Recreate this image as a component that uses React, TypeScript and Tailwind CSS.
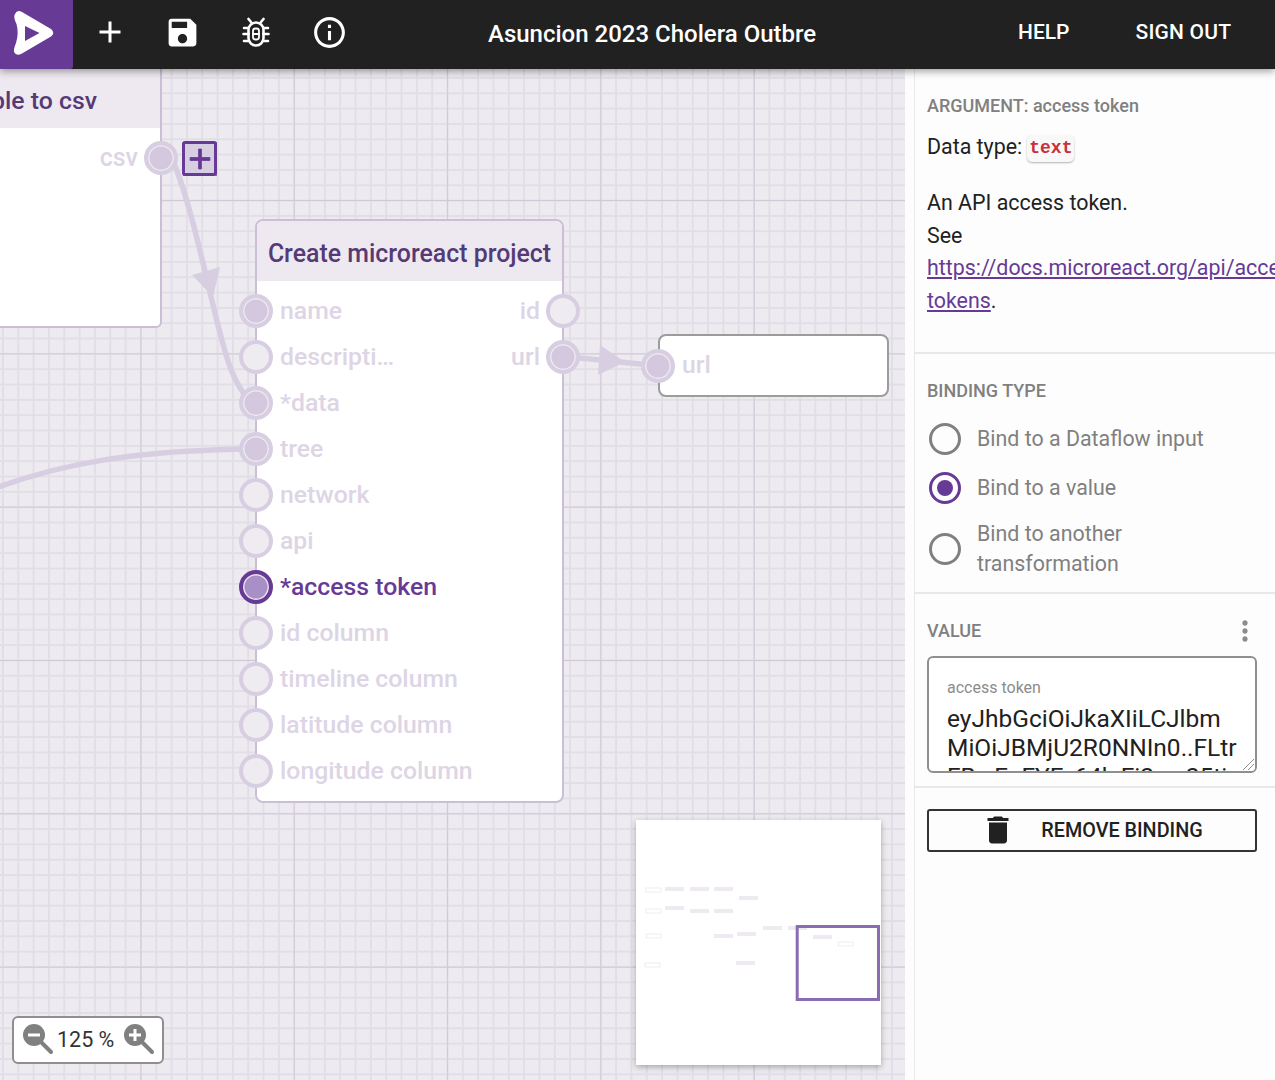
import React from 'react';
import { MdAdd, MdSave, MdInfoOutline, MdDelete, MdMoreVert } from 'react-icons/md';

type PortState = 'bound' | 'free' | 'active';

const Port: React.FC<{ state: PortState; className?: string }> = ({ state, className = '' }) => {
  const look = {
    bound: 'border-[#d8cee2] bg-[#d3c8de] shadow-[inset_0_0_0_1.5px_#eee9f2]',
    free: 'border-[#d8cee2] bg-[#eeebf1]',
    active: 'border-[#673a96] bg-[#a88fc6] shadow-[inset_0_0_0_1.5px_#e9e2f0]',
  }[state];
  return <span className={`relative z-10 block w-[34px] h-[34px] shrink-0 rounded-full border-[4px] ${look} ${className}`} />;
};

const inputs: { name: string; state: PortState }[] = [
  { name: 'name', state: 'bound' },
  { name: 'descripti…', state: 'free' },
  { name: '*data', state: 'bound' },
  { name: 'tree', state: 'bound' },
  { name: 'network', state: 'free' },
  { name: 'api', state: 'free' },
  { name: '*access token', state: 'active' },
  { name: 'id column', state: 'free' },
  { name: 'timeline column', state: 'free' },
  { name: 'latitude column', state: 'free' },
  { name: 'longitude column', state: 'free' },
];

const outputs: { name: string; state: PortState }[] = [
  { name: 'id', state: 'free' },
  { name: 'url', state: 'bound' },
];

const miniBars = [
  [35, 77], [60, 77], [84, 77], [109, 86], [35, 96], [60, 99], [84, 99], [84, 124], [107, 122], [133, 116], [158, 116], [183, 125], [106, 151],
];
const miniBoxes = [
  [16, 78], [16, 99], [16, 124], [15, 153], [208, 132],
];

const Edges = () => (
  <svg className="absolute inset-0 w-full h-full" viewBox="0 0 905 1011" fill="none">
    <g stroke="#d8cee2" strokeWidth="5.5" strokeLinecap="round">
      <path d="M172 90 C188 125 203 195 214 240 S232 315 252 334" />
      <path d="M-2 418 C60 396 130 381 254 380" />
      <path d="M570 288 L620 293 L650 296" />
    </g>
    <polygon points="220,198 192,206 213,228" fill="#d8cee2" />
    <polygon points="600,276 598,306 625,293" fill="#d8cee2" />
  </svg>
);

const Minimap = () => (
  <svg className="absolute left-[636px] top-[751px] w-[245px] h-[245px] bg-white shadow-[0_2px_6px_rgba(0,0,0,0.3)]" viewBox="0 0 245 245">
    {miniBars.map(([x, y]) => (
      <rect key={`${x}-${y}`} x={x - 6} y={y - 10} width="19" height="4" fill="#efeaf2" />
    ))}
    {miniBoxes.map(([x, y]) => (
      <rect key={`${x}-${y}`} x={x - 6} y={y - 10} width="15" height="4" fill="#fff" stroke="#eeeeee" />
    ))}
    <rect x="161.2" y="106.5" width="81.3" height="73" fill="none" stroke="#8a6cb3" strokeWidth="3" />
  </svg>
);

const ZoomGlyph: React.FC<{ plus?: boolean }> = ({ plus }) => (
  <svg width="32" height="32" viewBox="0 0 32 32">
    <line x1="17" y1="17" x2="29" y2="29" stroke="#808080" strokeWidth="4" strokeLinecap="round" />
    <circle cx="12" cy="12" r="11" fill="#808080" />
    <rect x="6" y="10.5" width="12" height="3" fill="#fff" />
    {plus && <rect x="10.5" y="6" width="3" height="12" fill="#fff" />}
  </svg>
);

const BugIcon = () => (
  <svg width="28" height="30" viewBox="0 0 28 30" fill="none" stroke="#fff" strokeWidth="2.6" strokeLinecap="round">
    <rect x="6.5" y="5.5" width="15" height="23" rx="7.5" />
    <rect x="11" y="11.5" width="6" height="11" rx="2.5" strokeWidth="1.8" />
    <path d="M11 17 H17" strokeWidth="1.8" />
    <path d="M9 5 L6.5 2 M19 5 L21.5 2 M2 11 H6.5 M26 11 H21.5 M1.5 17 H6.5 M26.5 17 H21.5 M2 24 H6.5 M26 24 H21.5" />
  </svg>
);

const Logo = () => (
  <svg className="absolute inset-0" width="73" height="69" viewBox="0 0 73 69">
    <path d="M15 14 Q17 9.5 22 12 L51 29 Q55.5 33 51 36.5 L22 53.5 Q16 56.5 14 52 Q13.5 49 16 43 Q19 33.5 16.5 24 Q13 17 15 14 Z" fill="#fff" />
    <polygon points="25,26 39.5,33 25,41" fill="#673a96" />
  </svg>
);

const Radio: React.FC<{ checked?: boolean }> = ({ checked }) =>
  checked ? (
    <span className="flex w-[32px] h-[32px] shrink-0 items-center justify-center rounded-full border-[3px] border-[#673a96]">
      <span className="block w-[16px] h-[16px] rounded-full bg-[#673a96]" />
    </span>
  ) : (
    <span className="block w-[32px] h-[32px] shrink-0 rounded-full border-[3px] border-[#808080]" />
  );

const App: React.FC = () => {
  return (
    <div className="flex flex-col w-[1275px] h-[1080px] overflow-hidden font-['Roboto',sans-serif] bg-[#fdfdfd]">
      <header className="relative z-20 flex items-center h-[69px] shrink-0 bg-[#212121] text-white shadow-[0_2px_8px_rgba(0,0,0,0.4)]">
        <div className="relative w-[73px] h-full bg-[#673a96] rounded-br-[3px]">
          <Logo />
        </div>
        <div className="flex items-center h-full">
          <button className="flex items-center justify-center w-[73px] -mt-[5px]"><MdAdd size={36} /></button>
          <button className="flex items-center justify-center w-[73px] -mt-[5px]"><MdSave size={37} /></button>
          <button className="flex items-center justify-center w-[74px] -mt-[5px]"><BugIcon /></button>
          <button className="flex items-center justify-center w-[73px] -mt-[5px]"><MdInfoOutline size={37} /></button>
        </div>
        <div className="ml-[122px] w-[328px] -mt-[2px] overflow-hidden whitespace-nowrap text-[24px] font-medium leading-[32px]">
          Asuncion 2023 Cholera Outbreak
        </div>
        <div className="ml-[202px] text-[21px] font-medium -mt-[4px]">HELP</div>
        <div className="ml-[66px] text-[21px] font-medium tracking-[0.2px] -mt-[4px]">SIGN OUT</div>
      </header>

      <div className="flex flex-1 min-h-0">
        <main className="relative w-[905px] shrink-0 overflow-hidden bg-[#edebf0] bg-[linear-gradient(to_right,#d0cad8_1px,transparent_1px),linear-gradient(to_bottom,#d0cad8_1px,transparent_1px),linear-gradient(to_right,#e2dee7_2px,transparent_2px),linear-gradient(to_bottom,#e2dee7_2px,transparent_2px)] bg-[size:153.33px_153.33px,153.33px_153.33px,15.33px_15.33px,15.33px_15.33px] bg-[position:140.4px_0,0_131px,2px_0,0_8px]">
          <Edges />

          <section className="absolute left-[-160px] top-[-2px] w-[322px] h-[261px] rounded-b-[6px] border-2 border-[#cabfd6] bg-white">
            <div className="flex justify-end items-center h-[59px] pr-[63px] bg-[#eee9f1] text-[24.8px] font-medium text-[#553a75] whitespace-nowrap pt-[4px]">
              Convert table to csv
            </div>
            <div className="flex items-center justify-end h-[46px] mt-[7px] text-[25px] font-medium text-[#ddd5e5]">
              <span>csv</span>
              <Port state="bound" className="ml-[6px] -mr-[18px]" />
            </div>
          </section>
          <button className="absolute left-[182px] top-[72px] z-10 flex items-center justify-center w-[35px] h-[35px] rounded-[3px] border-[3.5px] border-[#673a96] bg-[#d8cee2]">
            <MdAdd size={34} strokeWidth={0.6} className="text-[#673a96] shrink-0" />
          </button>

          <section className="absolute left-[255px] top-[150px] w-[309px] h-[584px] rounded-[8px] border-2 border-[#cabfd6] bg-white">
            <div className="flex items-center justify-center h-[60px] rounded-t-[6px] bg-[#eee9f1] text-[24.9px] font-medium text-[#553a75] whitespace-nowrap pt-[6px]">
              Create microreact project
            </div>
            <div className="flex flex-col pt-[7px]">
              {inputs.map((input, i) => (
                <div key={input.name} className="flex items-center justify-between h-[46px]">
                  <div className="flex items-center">
                    <Port state={input.state} className="-ml-[18px]" />
                    <span className={`ml-[7px] text-[24.8px] font-medium ${input.state === 'active' ? 'text-[#673a96]' : 'text-[#ddd5e5]'}`}>
                      {input.name}
                    </span>
                  </div>
                  {outputs[i] && (
                    <div className="flex items-center">
                      <span className="mr-[6px] text-[24.8px] font-medium text-[#ddd5e5]">{outputs[i].name}</span>
                      <Port state={outputs[i].state} className="-mr-[18px]" />
                    </div>
                  )}
                </div>
              ))}
            </div>
          </section>

          <section className="absolute left-[658px] top-[265px] flex items-center w-[231px] h-[63px] rounded-[8px] border-2 border-[#9c9c9c] bg-white">
            <Port state="bound" className="-ml-[19px]" />
            <span className="ml-[7px] -mt-[2px] text-[24.8px] font-medium text-[#ddd5e5]">url</span>
          </section>

          <Minimap />

          <div className="absolute left-[12px] bottom-[16px] flex items-center w-[152px] h-[48px] pl-[8px] rounded-[6px] border-2 border-[#8f8f8f] bg-white text-[21.5px] text-[#333333]">
            <span className="-mt-[2px]"><ZoomGlyph /></span>
            <span className="ml-[3px] whitespace-nowrap">125 %</span>
            <span className="ml-[9px] -mt-[2px]"><ZoomGlyph plus /></span>
          </div>
        </main>

        <aside className="ml-[9px] flex-1 min-w-0 overflow-hidden border-l border-[#e8e8e8] text-[#212121]">
          <section className="h-[285px] px-[12px] pt-[25px] border-b-2 border-[#e8e8e8]">
            <h3 className="text-[18px] leading-[24px] font-medium text-[#808080] whitespace-nowrap">ARGUMENT: access token</h3>
            <p className="mt-[13px] flex items-center text-[21.4px] leading-[32px]">
              Data type:
              <code className="ml-[5px] mt-[2px] px-[2px] h-[27px] leading-[27px] rounded-[5px] bg-[#f8f8f8] shadow-[0_1px_2px_rgba(0,0,0,0.3)] font-['Liberation_Mono',monospace] font-bold text-[18px] text-[#c9303a]">text</code>
            </p>
            <div className="mt-[24px] text-[21.4px] leading-[32.5px]">
              <p>An API access token.</p>
              <p>See</p>
              <p className="whitespace-nowrap"><a className="text-[#673a96] underline">https://docs.microreact.org/api/access-</a></p>
              <p><a className="text-[#673a96] underline">tokens</a>.</p>
            </div>
          </section>

          <section className="h-[240px] px-[12px] pt-[25px] border-b-2 border-[#e8e8e8]">
            <h3 className="text-[18px] leading-[24px] font-medium text-[#808080]">BINDING TYPE</h3>
            <div className="mt-[11px] flex flex-col text-[21.4px] leading-[30px] text-[#808080]">
              <label className="flex items-center gap-[16px] h-[49px] pl-[2px]"><Radio /><span>Bind to a Dataflow input</span></label>
              <label className="flex items-center gap-[16px] h-[49px] pl-[2px]"><Radio checked /><span>Bind to a value</span></label>
              <label className="flex items-center gap-[16px] h-[73px] pl-[2px]"><Radio /><span>Bind to another<br />transformation</span></label>
            </div>
          </section>

          <section className="h-[194px] px-[12px] pt-[25px] border-b-2 border-[#e8e8e8]">
            <div className="flex items-center justify-between h-[24px]">
              <h3 className="text-[18px] leading-[24px] font-medium text-[#808080]">VALUE</h3>
              <MdMoreVert size={32} className="text-[#8c8c8c] mr-[2px]" />
            </div>
            <div className="relative mt-[13px] w-[330px] h-[117px] overflow-hidden rounded-[6px] border-2 border-[#8f8f8f] bg-white px-[18px] pt-[20px]">
              <div className="text-[16px] leading-[20px] text-[#8c8c8c]">access token</div>
              <div className="mt-[6px] text-[24.5px] leading-[29px] text-[#212121] whitespace-nowrap">
                <div>eyJhbGciOiJkaXIiLCJlbm</div>
                <div>MiOiJBMjU2R0NNIn0..FLtr</div>
                <div>FBwFoFYF_64k.Fi2aw25ti</div>
              </div>
              <svg className="absolute right-0 bottom-0 w-[14px] h-[14px] bg-white" viewBox="0 0 14 14" stroke="#8f8f8f" strokeWidth="1">
                <path d="M2 13 L13 2 M7 13 L13 7" />
              </svg>
            </div>
          </section>

          <section className="px-[12px] pt-[21px]">
            <button className="relative flex items-center justify-center w-[330px] h-[43px] rounded-[3px] border-2 border-[#333333] text-[19.8px] font-medium text-[#212121]">
              <MdDelete size={36} className="absolute left-[51px] top-[1px] text-[#212121]" />
              <span className="ml-[60px]">REMOVE BINDING</span>
            </button>
          </section>
        </aside>
      </div>
    </div>
  );
};

export default App;
